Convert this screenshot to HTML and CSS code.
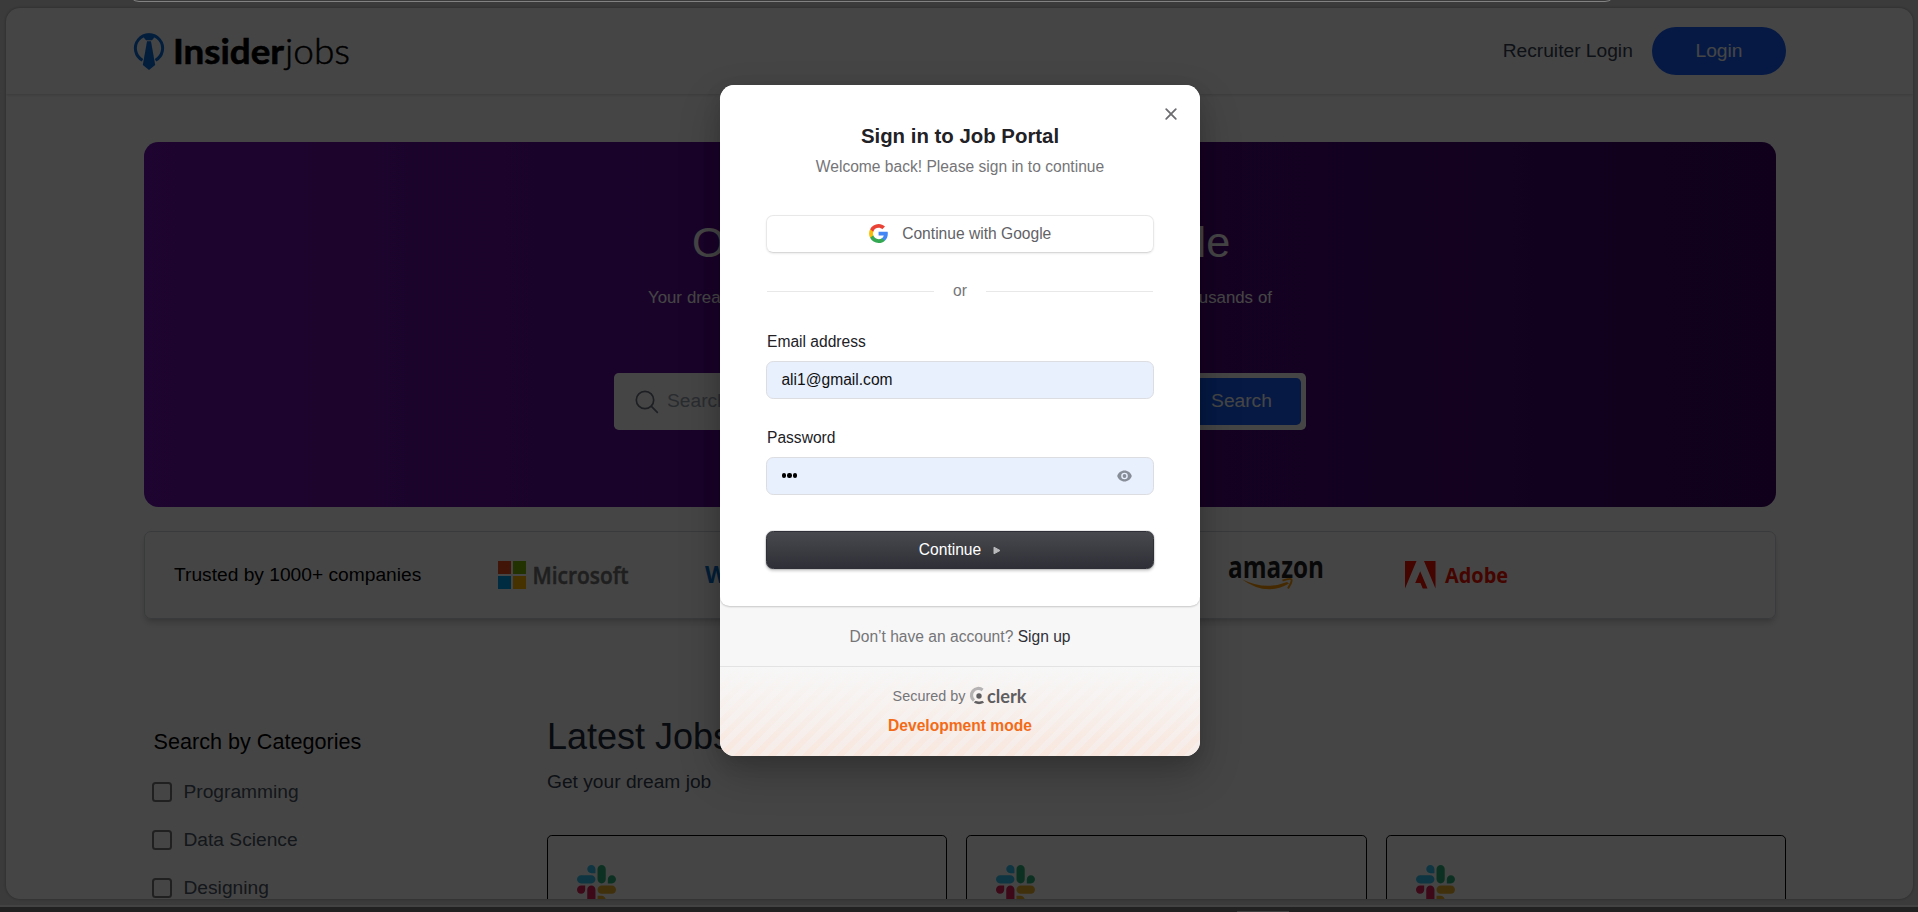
FILE: index.html
```html
<!DOCTYPE html>
<html lang="en">
<head>
<meta charset="utf-8">
<title>Insiderjobs</title>
<link rel="stylesheet" href="styles.css">
</head>
<body>
<svg width="0" height="0" class="defs">
  <symbol id="slack" viewBox="0 0 122.8 122.8">
    <path d="M25.8 77.6c0 7.1-5.8 12.9-12.9 12.9S0 84.7 0 77.6s5.8-12.9 12.9-12.9h12.9v12.9zm6.5 0c0-7.1 5.8-12.9 12.9-12.9s12.9 5.8 12.9 12.9v32.3c0 7.1-5.8 12.9-12.9 12.9s-12.9-5.8-12.9-12.9V77.6z" fill="#e01e5a"/>
    <path d="M45.2 25.8c-7.1 0-12.9-5.8-12.9-12.9S38.1 0 45.2 0s12.9 5.8 12.9 12.9v12.9H45.2zm0 6.5c7.1 0 12.9 5.8 12.9 12.9s-5.8 12.9-12.9 12.9H12.9C5.8 58.1 0 52.3 0 45.2s5.8-12.9 12.9-12.9h32.3z" fill="#36c5f0"/>
    <path d="M97 45.2c0-7.1 5.8-12.9 12.9-12.9s12.9 5.8 12.9 12.9-5.8 12.9-12.9 12.9H97V45.2zm-6.5 0c0 7.1-5.8 12.9-12.9 12.9s-12.9-5.8-12.9-12.9V12.9C64.7 5.8 70.5 0 77.6 0s12.9 5.8 12.9 12.9v32.3z" fill="#2eb67d"/>
    <path d="M77.6 97c7.1 0 12.9 5.8 12.9 12.9s-5.8 12.9-12.9 12.9-12.9-5.8-12.9-12.9V97h12.9zm0-6.5c-7.1 0-12.9-5.8-12.9-12.9s5.8-12.9 12.9-12.9h32.3c7.1 0 12.9 5.8 12.9 12.9s-5.8 12.9-12.9 12.9H77.6z" fill="#ecb22e"/>
  </symbol>
</svg>

<div class="window">
  <div class="page">
    <header class="nav">
      <svg class="logo" width="218" height="44" viewBox="0 0 218 44">
        <path d="M8.500 33.200A13.600 13.600 0 1 1 21.500 33.200" fill="none" stroke="#0b71dc" stroke-width="3"/>
        <path d="M8 8.500Q15 4.500 22 8.500L18 13.300h-6z" fill="#0b71dc"/>
        <path d="M13 14.200h4L21.200 38 15 43l-6.200-5z" fill="#0b71dc"/>
        <text x="39" y="37" class="logo-bold" textLength="111" lengthAdjust="spacingAndGlyphs">Insider</text>
        <text x="151" y="37" class="logo-light" textLength="65" lengthAdjust="spacingAndGlyphs">jobs</text>
      </svg>
      <nav class="nav-links">
        <span class="recruiter">Recruiter Login</span>
        <span class="login">Login</span>
      </nav>
    </header>

    <section class="hero">
      <h2 class="hero-title">Over 10,000+ jobs Available</h2>
      <p class="hero-text">Your dream career starts here. Explore the best job opportunities from thousands of</p>
      <div class="search">
        <svg width="24" height="24" viewBox="0 0 24 24" fill="none" stroke="#6b7280" stroke-width="1.700"><circle cx="10" cy="10" r="8.700"/><path d="M16.200 16.200l6.600 6.600"/></svg>
        <span class="placeholder">Search for jobs</span>
        <span class="search-btn">Search</span>
      </div>
    </section>

    <section class="trusted">
      <span class="trusted-label">Trusted by 1000+ companies</span>
      <svg class="microsoft" width="132" height="32" viewBox="0 0 132 32">
        <path fill="#f25022" d="M0 2h13v13H0z"/><path fill="#7fba00" d="M15 2h13v13H15z"/>
        <path fill="#00a4ef" d="M0 17h13v13H0z"/><path fill="#ffb900" d="M15 17h13v13H15z"/>
        <text x="34.500" y="24.500" class="ms-text" textLength="96" lengthAdjust="spacingAndGlyphs">Microsoft</text>
      </svg>
      <svg class="walmart" width="140" height="32" viewBox="0 0 140 32">
        <text x="0" y="24" class="wm-text" textLength="100" lengthAdjust="spacingAndGlyphs">Walmart</text>
      </svg>
      <svg class="amazon" width="96" height="34" viewBox="0 0 96 34">
        <text x="-1" y="20" class="az-text" textLength="96" lengthAdjust="spacingAndGlyphs">amazon</text>
        <path d="M12.500 21Q37 39 60 25.500L58 24Q36 33 12.500 21z" fill="#f90"/>
        <path d="M53.500 22.500q8-2.500 9-1t-3.500 9" fill="none" stroke="#f90" stroke-width="2"/>
      </svg>
      <svg class="adobe" width="106" height="32" viewBox="0 0 106 32">
        <path fill="#fa0f00" d="M0 2h11.500L0 29.500zM19 2h11.500v27.500zM15.200 12.200L22.500 29.500h-4.800l-2.200-5.500h-5.300z"/>
        <text x="40" y="24" class="ad-text" textLength="63" lengthAdjust="spacingAndGlyphs">Adobe</text>
      </svg>
    </section>

    <section class="listing">
      <aside class="filters">
        <h4 class="filters-title">Search by Categories</h4>
        <ul class="filter-list">
          <li><i class="box"></i>Programming</li>
          <li><i class="box"></i>Data Science</li>
          <li><i class="box"></i>Designing</li>
        </ul>
      </aside>
      <div class="jobs">
        <h3 class="jobs-title">Latest Jobs</h3>
        <p class="jobs-text">Get your dream job</p>
        <div class="cards">
          <div class="card"><svg width="39" height="39"><use href="#slack"/></svg></div>
          <div class="card"><svg width="39" height="39"><use href="#slack"/></svg></div>
          <div class="card"><svg width="39" height="39"><use href="#slack"/></svg></div>
        </div>
      </div>
    </section>
  </div>
  <div class="taskbar"><i></i></div>
</div>

<div class="backdrop">
  <div class="address-edge"></div>
  <div class="modal">
    <div class="modal-main">
      <svg class="close" width="12" height="12" viewBox="0 0 12 12" stroke="#6c6c70" stroke-width="1.800" stroke-linecap="round"><path d="M1.200 1.200l9.600 9.600M10.800 1.200L1.200 10.800"/></svg>
      <h1 class="modal-title">Sign in to Job Portal</h1>
      <p class="modal-sub">Welcome back! Please sign in to continue</p>
      <div class="google">
        <svg width="19" height="19" viewBox="0 0 48 48">
          <path fill="#4285f4" d="M47.500 24.500c0-1.600-.1-3.200-.4-4.700H24.200v9.100h13.100c-.6 3-2.300 5.500-4.800 7.200v6h7.700c4.500-4.200 7.300-10.300 7.300-17.600z"/>
          <path fill="#34a853" d="M24.200 48c6.500 0 11.900-2.100 15.900-5.800l-7.700-6c-2.200 1.500-4.900 2.300-8.200 2.300-6.300 0-11.600-4.200-13.500-9.900H2.800v6.200C6.900 42.700 14.900 48 24.200 48z"/>
          <path fill="#fbbc04" d="M10.700 28.600c-1-3-1-6.200 0-9.200v-6.200H2.800c-3.400 6.700-3.400 14.900 0 21.600z"/>
          <path fill="#ea4335" d="M24.200 9.500c3.500-.1 6.900 1.300 9.300 3.600l6.900-6.900C36 2.200 30.200 0 24.200 0 14.900 0 6.900 5.300 2.800 13.200l7.900 6.200c1.900-5.700 7.200-9.900 13.500-9.900z"/>
        </svg>
        <span>Continue with Google</span>
      </div>
      <div class="divider"><i></i><span>or</span><i></i></div>
      <div class="label">Email address</div>
      <div class="field">ali1@gmail.com</div>
      <div class="label">Password</div>
      <div class="field">
        <span class="dots"><i></i><i></i><i></i></span>
        <svg width="15" height="12" viewBox="0 0 15 12"><path fill="#888e98" fill-rule="evenodd" d="M7.500.5C11 .5 13.700 2.800 14.800 6 13.700 9.200 11 11.500 7.500 11.500S1.300 9.200.2 6C1.300 2.800 4 .5 7.500.5zm0 2.200a3.300 3.300 0 1 0 0 6.600 3.300 3.300 0 0 0 0-6.600z"/><circle cx="7.500" cy="6" r="1.900" fill="#888e98"/></svg>
      </div>
      <div class="continue"><span>Continue</span><svg width="8" height="9" viewBox="0 0 8 9"><path d="M1 1.200v6.600L7 4.500z" fill="#b9b9bc" stroke="#b9b9bc" stroke-linejoin="round"/></svg></div>
    </div>
    <div class="modal-signup">Don’t have an account? <b>Sign up</b></div>
    <div class="modal-dev">
      <div class="secured">Secured by
        <svg width="57" height="18" viewBox="0 0 57 18">
          <path d="M12.600 3A6.800 6.800 0 0 0 4 13.600" fill="none" stroke="#b4b2b2" stroke-width="3.200"/>
          <circle cx="9" cy="9" r="2.700" fill="#5f5d60"/>
          <path d="M5.200 14.400q3.900 1.400 7.600 0l.6 1.200q-4.400 2.200-8.800 0z" fill="#5f5d60" stroke="#5f5d60"/>
          <text x="17" y="15.500" class="clerk-text" textLength="39.500" lengthAdjust="spacingAndGlyphs">clerk</text>
        </svg>
      </div>
      <div class="dev">Development mode</div>
    </div>
  </div>
</div>
</body>
</html>
```
FILE: styles.css
```css
* { box-sizing: border-box; }
body {
  margin: 0;
  width: 1918px;
  height: 912px;
  overflow: hidden;
  font-family: "Liberation Sans", Arial, sans-serif;
  font-size: 19.2px;
}
h1, h2, h3, h4, p, ul { margin: 0; padding: 0; font-weight: 400; }
li { list-style: none; }
svg { display: block; flex: none; overflow: visible; }
.defs { position: absolute; }

.window {
  width: 1918px;
  height: 912px;
  padding: 8px 5px 0 6px;
  background: #dadada;
}
.page {
  height: 891px;
  background: #fff;
  border-radius: 14px;
  overflow: hidden;
  box-shadow: 0 0 3px rgba(0, 0, 0, .35);
}
.taskbar {
  height: 7px;
  margin: 6px -5px 0 -6px;
  border-top: 2px solid #f8f8f8;
  background: #7c7c7c;
}
.taskbar i {
  display: block;
  width: 52px;
  height: 1px;
  margin-left: 1237px;
  transform: translateY(4px);
  background: #e8e8e8;
}

.nav {
  height: 86px;
  padding: 0 127px 0 128px;
  display: flex;
  align-items: center;
  justify-content: space-between;
  box-shadow: 0 1px 3px rgba(0, 0, 0, .16);
}
.logo { margin-top: -4px; }
.logo-bold { font: 700 35px Lato, sans-serif; stroke: #000; stroke-width: .6px; }
.logo-light { font: 300 36px Lato, sans-serif; stroke: #000; stroke-width: .5px; }
.nav-links { display: flex; align-items: center; gap: 19.2px; color: #364153; }
.login {
  width: 134px;
  height: 48px;
  line-height: 47px;
  text-align: center;
  border-radius: 24px;
  background: #155dfc;
  color: #fff;
}

.hero {
  height: 365px;
  margin: 48px 137px 0 138px;
  border-radius: 14.4px;
  background: linear-gradient(to right, #6e11b0, #3c0366);
  color: #fff;
  display: flex;
  flex-direction: column;
  align-items: center;
}
.hero-title {
  width: 536px;
  margin-top: 76px;
  font-size: 43.2px;
  line-height: 49px;
  text-align-last: justify;
  white-space: nowrap;
}
.hero-text {
  width: 624px;
  margin-top: 19px;
  font-size: 16.8px;
  line-height: 24px;
  text-align-last: justify;
  white-space: nowrap;
}
.search {
  width: 692px;
  height: 57px;
  margin-top: 63px;
  padding: 0 5px 0 21px;
  border-radius: 4.8px;
  background: #fff;
  display: flex;
  align-items: center;
}
.placeholder { flex: 1; margin-left: 8px; line-height: 20px; padding-bottom: 1px; color: #99a1af; }
.search-btn {
  width: 119px;
  height: 47px;
  line-height: 46px;
  text-align: center;
  border-radius: 4.8px;
  background: #155dfc;
}

.trusted {
  height: 88px;
  margin: 24px 137px 0 138px;
  padding-left: 29px;
  border: 1px solid #d1d5db;
  border-radius: 7px;
  box-shadow: 0 5px 7px -1px rgba(0, 0, 0, .16), 0 2px 4px -2px rgba(0, 0, 0, .12);
  display: flex;
  align-items: center;
}
.trusted-label { width: 324px; white-space: nowrap; }
.walmart { margin-left: 75px; }
.amazon { margin-left: 384px; }
.adobe { margin-left: 80px; }
.ms-text { font: 600 24px "Open Sans", sans-serif; fill: #737373; stroke: #737373; stroke-width: .5px; }
.wm-text { font: 700 23px "Open Sans", sans-serif; fill: #0071ce; }
.az-text { font: 700 31px "Open Sans", sans-serif; fill: #221f1f; }
.ad-text { font: 700 22px "Open Sans", sans-serif; fill: #fa0f00; }

.listing { display: flex; margin-top: 96px; padding: 0 127px 0 146px; }
.filters { width: 395px; }
.filters-title { margin: 13px 0 0 1.6px; font-size: 21.6px; line-height: 28px; }
.filter-list { margin-top: 24px; }
.filter-list li {
  height: 24px;
  margin-bottom: 24px;
  display: flex;
  align-items: center;
  gap: 12px;
  color: #4a5565;
}
.box {
  width: 19.5px;
  height: 19.5px;
  border: 2px solid #767676;
  border-radius: 3.5px;
}
.jobs { flex: 1; }
.jobs-title { margin-top: 0; font-size: 36px; line-height: 44px; color: #1e2939; }
.jobs-text { margin-top: 11px; line-height: 24px; color: #364153; }
.cards { display: grid; grid-template-columns: repeat(3, 1fr); gap: 19.2px; margin-top: 41px; }
.card { height: 220px; padding: 29px 29px; border: 1px solid #000; border-radius: 4.8px; }

.backdrop {
  position: absolute;
  inset: 0;
  width: 1918px;
  height: 912px;
  background: rgba(0, 0, 0, .73);
}
.address-edge {
  position: absolute;
  left: 128px;
  top: -20px;
  width: 1488px;
  height: 22px;
  border: 1px solid #828282;
  border-radius: 11px;
}
.modal {
  position: absolute;
  left: 720px;
  top: 85px;
  width: 480px;
  height: 671px;
  border-radius: 14.4px;
  background: #f7f7f7;
  overflow: hidden;
  font-size: 15.6px;
  text-align: center;
  box-shadow: 0 18px 42px rgba(0, 0, 0, .22), 0 6px 18px rgba(0, 0, 0, .12);
}
.modal-main {
  position: relative;
  height: 521px;
  padding: 37px 46px 0;
  background: #fff;
  border-radius: 0 0 9.6px 9.6px;
  box-shadow: 0 1px 2px rgba(0, 0, 0, .2);
}
.close { position: absolute; right: 23px; top: 23px; }
.modal-title { font-size: 20.4px; font-weight: 700; line-height: 28px; color: #212126; }
.modal-sub { margin-top: 6px; line-height: 22px; color: #757578; }
.google {
  height: 38px;
  margin-top: 37px;
  border: 1px solid #e8e8e8;
  border-bottom-color: #d8d8d8;
  border-radius: 7.2px;
  box-shadow: 0 1px 2px rgba(0, 0, 0, .08);
  display: flex;
  align-items: center;
  justify-content: center;
  gap: 14.5px;
  color: #626266;
}
.google svg { margin-top: -1px; }
.divider {
  height: 20px;
  margin: 28px 1px 31px;
  display: flex;
  align-items: center;
  gap: 19px;
  line-height: 20px;
  color: #757578;
}
.divider i { flex: 1; height: 1px; background: #e8e8e8; }
.label { height: 20px; margin-left: 1px; line-height: 20px; text-align: left; color: #212126; }
.field {
  height: 38px;
  margin: 9px 0 29px;
  padding: 0 21px 0 14.4px;
  border: 1px solid #dcdde0;
  border-radius: 7.2px;
  background: #e8f0fe;
  line-height: 36px;
  text-align: left;
  color: #111;
  display: flex;
  align-items: center;
  justify-content: space-between;
}
.dots { display: flex; gap: 1px; margin: -1px 0 0 .6px; }
.dots i { width: 4.4px; height: 4.4px; border-radius: 50%; background: #000; }
.continue {
  height: 38px;
  margin-top: 36px;
  border: 1px solid #2f3037;
  border-radius: 7.2px;
  background: linear-gradient(#48494e, #2f3037);
  box-shadow: 0 2px 3px rgba(0, 0, 0, .2), 0 0 1px #2f3037;
  color: #fff;
  display: flex;
  align-items: center;
  justify-content: center;
  gap: 12px;
}
.modal-signup { height: 60px; line-height: 61px; color: #757578; }
.modal-signup b { font-weight: 400; color: #2f3037; }
.modal-dev {
  height: 90px;
  padding-top: 19px;
  border-top: 1px solid #e3e3e3;
  background:
    linear-gradient(#f7f7f7, rgba(247, 247, 247, 0)),
    repeating-linear-gradient(-45deg, #f8e7de 0 6px, #f6ece8 6px 12px);
}
.secured {
  height: 20px;
  display: flex;
  align-items: center;
  justify-content: center;
  gap: 5px;
  font-size: 14.4px;
  color: #757578;
}
.clerk-text { font: 700 18px Lato, sans-serif; fill: #5f5d60; }
.dev { margin-top: 9px; line-height: 22px; font-weight: 700; color: #f36b16; }
```
